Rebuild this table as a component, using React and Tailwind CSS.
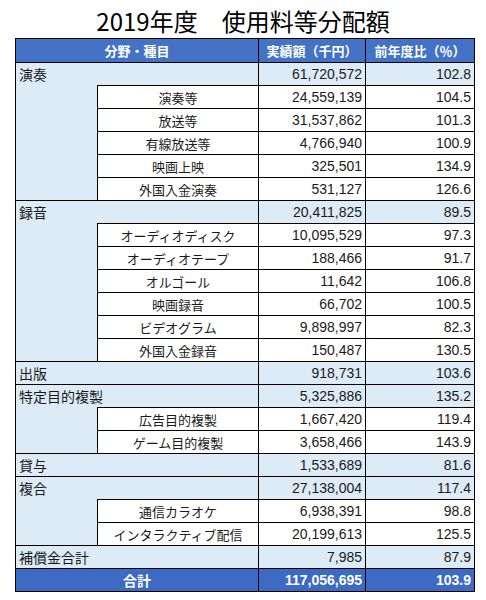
const GROUPS = [
  {
    name: '演奏', amount: '61,720,572', ratio: '102.8',
    items: [
      ['演奏等', '24,559,139', '104.5'],
      ['放送等', '31,537,862', '101.3'],
      ['有線放送等', '4,766,940', '100.9'],
      ['映画上映', '325,501', '134.9'],
      ['外国入金演奏', '531,127', '126.6'],
    ],
  },
  {
    name: '録音', amount: '20,411,825', ratio: '89.5',
    items: [
      ['オーディオディスク', '10,095,529', '97.3'],
      ['オーディオテープ', '188,466', '91.7'],
      ['オルゴール', '11,642', '106.8'],
      ['映画録音', '66,702', '100.5'],
      ['ビデオグラム', '9,898,997', '82.3'],
      ['外国入金録音', '150,487', '130.5'],
    ],
  },
  { name: '出版', amount: '918,731', ratio: '103.6', items: [] },
  {
    name: '特定目的複製', amount: '5,325,886', ratio: '135.2',
    items: [
      ['広告目的複製', '1,667,420', '119.4'],
      ['ゲーム目的複製', '3,658,466', '143.9'],
    ],
  },
  { name: '貸与', amount: '1,533,689', ratio: '81.6', items: [] },
  {
    name: '複合', amount: '27,138,004', ratio: '117.4',
    items: [
      ['通信カラオケ', '6,938,391', '98.8'],
      ['インタラクティブ配信', '20,199,613', '125.5'],
    ],
  },
  { name: '補償金合計', amount: '7,985', ratio: '87.9', items: [] },
];

const jp = "font-['Noto_Sans_CJK_JP',sans-serif]";
const num = "font-['Liberation_Sans',Arial,sans-serif] text-[14px] text-right pr-[3px]";

function GroupRows({ group }) {
  const hasItems = group.items.length > 0;
  return (
    <>
      <tr className="h-[23px] bg-[#DDEBF7]">
        <td
          colSpan={2}
          className={`border border-black pl-[3px] text-[14px] whitespace-nowrap ${hasItems ? 'border-b-0' : ''}`}
        >
          {group.name}
        </td>
        <td className={`border border-black ${num}`}>{group.amount}</td>
        <td className={`border border-black ${num}`}>{group.ratio}</td>
      </tr>
      {group.items.map(([label, amount, ratio], i) => (
        <tr key={label} className="h-[23px]">
          {i === 0 && (
            <td rowSpan={group.items.length} className="border border-black border-t-0 bg-[#DDEBF7]" />
          )}
          <td className="border border-black bg-white text-center text-[13px] whitespace-nowrap">{label}</td>
          <td className={`border border-black bg-white ${num}`}>{amount}</td>
          <td className={`border border-black bg-white ${num}`}>{ratio}</td>
        </tr>
      ))}
    </>
  );
}

export default function App() {
  return (
    <div className={`w-[486px] h-[600px] bg-white text-[#1a1a1a] ${jp}`}>
      <h1 className="pt-[9px] h-[38px] text-center text-[24px] leading-[24px] font-normal text-black">
        2019年度　使用料等分配額
      </h1>
      <table className="ml-[15px] w-[459px] table-fixed border-collapse leading-none">
        <colgroup>
          <col className="w-[82px]" />
          <col className="w-[161px]" />
          <col className="w-[107px]" />
          <col className="w-[109px]" />
        </colgroup>
        <thead>
          <tr className="h-[24px] bg-[#4472C4] text-white text-[13px] font-bold">
            <th colSpan={2} className="border border-black font-bold">分野・種目</th>
            <th className="border border-black font-bold">実績額（千円）</th>
            <th className="border border-black font-bold">前年度比（％）</th>
          </tr>
        </thead>
        <tbody>
          {GROUPS.map((g) => (
            <GroupRows key={g.name} group={g} />
          ))}
          <tr className="h-[23px] bg-[#3D6BC4] text-white">
            <td colSpan={2} className="border border-black text-center text-[14px] font-bold">合計</td>
            <td className={`border border-black font-bold ${num}`}>117,056,695</td>
            <td className={`border border-black font-bold ${num}`}>103.9</td>
          </tr>
        </tbody>
      </table>
    </div>
  );
}
